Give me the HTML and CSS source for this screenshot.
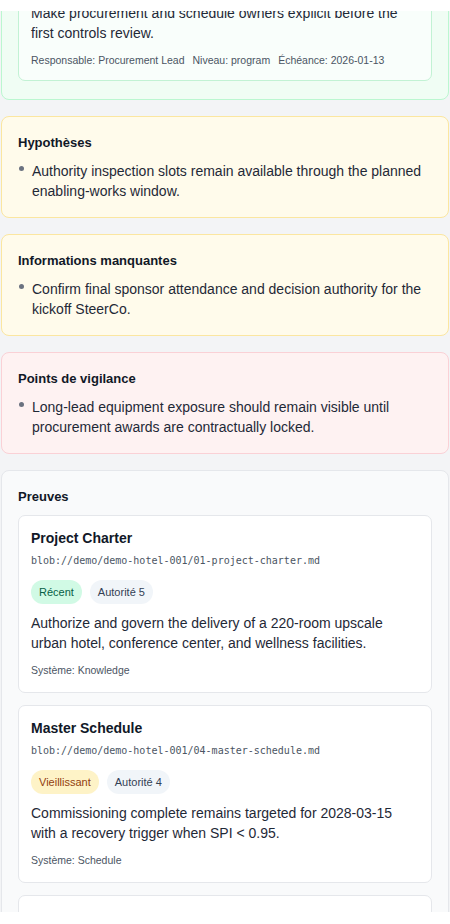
FILE: index.html
```html
<!DOCTYPE html>
<html lang="fr">
<head>
<meta charset="utf-8">
<title>Synthèse</title>
<link rel="stylesheet" href="styles.css">
</head>
<body>
<header class="topbar"></header>
<main class="scroller">
  <div class="content">
    <section class="panel panel-green">
      <h3 class="panel-title">Actions recommandées</h3>
      <article class="item item-green">
        <h4 class="item-title">Verrouiller les responsables des lots critiques</h4>
        <p class="item-desc">Make procurement and schedule owners explicit before the first controls review.</p>
        <div class="meta">
          <span>Responsable: Procurement Lead</span>
          <span>Niveau: program</span>
          <span>Échéance: 2026-01-13</span>
        </div>
      </article>
    </section>

    <section class="panel panel-yellow">
      <h3 class="panel-title">Hypothèses</h3>
      <ul class="bullets">
        <li>Authority inspection slots remain available through the planned enabling-works window.</li>
      </ul>
    </section>

    <section class="panel panel-yellow">
      <h3 class="panel-title">Informations manquantes</h3>
      <ul class="bullets">
        <li>Confirm final sponsor attendance and decision authority for the kickoff SteerCo.</li>
      </ul>
    </section>

    <section class="panel panel-red">
      <h3 class="panel-title">Points de vigilance</h3>
      <ul class="bullets">
        <li>Long-lead equipment exposure should remain visible until procurement awards are contractually locked.</li>
      </ul>
    </section>

    <section class="panel panel-gray">
      <h3 class="panel-title">Preuves</h3>
      <div class="evidence-list">
        <article class="item">
          <h4 class="item-title">Project Charter</h4>
          <div class="mono">blob://demo/demo-hotel-001/01-project-charter.md</div>
          <div class="badges">
            <span class="badge badge-green">Récent</span>
            <span class="badge badge-slate">Autorité 5</span>
          </div>
          <p class="item-desc">Authorize and govern the delivery of a 220-room upscale urban hotel, conference center, and wellness facilities.</p>
          <div class="system">Système: Knowledge</div>
        </article>
        <article class="item">
          <h4 class="item-title">Master Schedule</h4>
          <div class="mono">blob://demo/demo-hotel-001/04-master-schedule.md</div>
          <div class="badges">
            <span class="badge badge-amber">Vieillissant</span>
            <span class="badge badge-slate">Autorité 4</span>
          </div>
          <p class="item-desc">Commissioning complete remains targeted for 2028-03-15 with a recovery trigger when SPI &lt; 0.95.</p>
          <div class="system">Système: Schedule</div>
        </article>
        <article class="item">
          <h4 class="item-title">Cost Report</h4>
          <div class="mono">blob://demo/demo-hotel-001/06-cost-report.md</div>
          <div class="badges">
            <span class="badge badge-green">Récent</span>
            <span class="badge badge-slate">Autorité 4</span>
          </div>
          <p class="item-desc">Forecast at completion remains within the approved contingency envelope.</p>
          <div class="system">Système: Cost</div>
        </article>
      </div>
    </section>
  </div>
</main>
<footer class="bottombar"></footer>
</body>
</html>
```

FILE: styles.css
```css
* { box-sizing: border-box; }

html, body {
  margin: 0;
  padding: 0;
  height: 100%;
}

body {
  display: flex;
  flex-direction: column;
  height: 924px;
  overflow: hidden;
  background: #ffffff;
  font-family: "Liberation Sans", Arial, sans-serif;
  color: #1f2937;
  font-size: 14px;
  line-height: 20px;
}

.topbar {
  height: 11px;
  flex: 0 0 11px;
  background: #ffffff;
}

.bottombar {
  height: 12px;
  flex: 0 0 12px;
  background: #ffffff;
}

.scroller {
  flex: 1 1 auto;
  overflow: hidden;
  background: #f3f4f6;
}

.content {
  display: flex;
  flex-direction: column;
  gap: 16px;
  padding: 0 1px;
  margin-top: -90px;
}

.panel {
  border: 1px solid #e5e7eb;
  border-radius: 8px;
  padding: 16px;
  display: flex;
  flex-direction: column;
  gap: 8px;
}

.panel-green {
  background: #f0fdf4;
  border-color: #bbf7d0;
  padding-bottom: 18px;
}

.panel-yellow {
  background: #fffbeb;
  border-color: #fbe6a0;
}

.panel-red {
  background: #fef2f2;
  border-color: #fad1d6;
}

.panel-gray {
  background: #f9fafb;
  border-color: #e5e7eb;
}

.panel-title {
  margin: 0;
  font-size: 13px;
  line-height: 20px;
  font-weight: 700;
  color: #111827;
}

.bullets {
  list-style: none;
  margin: 0;
  padding: 0;
}

.bullets li {
  display: flex;
  gap: 8px;
  color: #1f2937;
}

.bullets li::before {
  content: "";
  flex: 0 0 5px;
  width: 5px;
  height: 5px;
  margin-top: 5px;
  margin-left: 1px;
  border-radius: 50%;
  background: #6b7280;
}

.evidence-list {
  display: flex;
  flex-direction: column;
  gap: 12px;
}

.item {
  background: #ffffff;
  border: 1px solid #e5e7eb;
  border-radius: 7px;
  padding: 12px 12px 14px;
  display: flex;
  flex-direction: column;
}

.item-green {
  background: #f9fefb;
  border-color: #c2f2d4;
  padding-bottom: 12px;
}

.item-title {
  margin: 0;
  font-size: 14px;
  line-height: 20px;
  font-weight: 700;
  color: #111827;
}

.mono {
  margin-top: 4px;
  font-family: "DejaVu Sans Mono", "Liberation Mono", monospace;
  font-size: 10px;
  line-height: 18px;
  color: #4b5563;
}

.badges {
  margin-top: 10px;
  display: flex;
  gap: 8px;
}

.badge {
  height: 24px;
  line-height: 24px;
  padding: 0 8px;
  border-radius: 999px;
  font-size: 11px;
}

.badge-green {
  background: #d1fae5;
  color: #065f46;
}

.badge-slate {
  background: #f1f5f9;
  color: #334155;
}

.badge-amber {
  background: #fef3c7;
  color: #92400e;
}

.item-desc {
  margin: 9px 0 0;
  font-size: 14px;
  line-height: 20px;
  color: #1f2937;
}

.item-green .item-desc {
  margin-top: 4px;
}

.system {
  margin-top: 9px;
  font-size: 10.5px;
  line-height: 16px;
  color: #4b5563;
}

.meta {
  margin-top: 9px;
  display: flex;
  gap: 8px;
  font-size: 10.5px;
  line-height: 16px;
  color: #4b5563;
}
```
